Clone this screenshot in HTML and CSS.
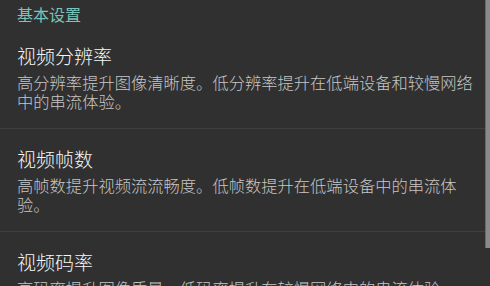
FILE: index.html
```html
<!DOCTYPE html>
<html lang="zh-CN">
<head>
<meta charset="utf-8">
<link rel="stylesheet" href="styles.css">
</head>
<body>
<div class="list">
  <div class="category">基本设置</div>
  <div class="item">
    <div class="title">视频分辨率</div>
    <div class="desc">高分辨率提升图像清晰度。低分辨率提升在低端设备和较慢网络中的串流体验。</div>
  </div>
  <div class="item">
    <div class="title">视频帧数</div>
    <div class="desc">高帧数提升视频流流畅度。低帧数提升在低端设备中的串流体验。</div>
  </div>
  <div class="item">
    <div class="title">视频码率</div>
    <div class="desc">高码率提升图像质量。低码率提升在较慢网络中的串流体验。</div>
  </div>
</div>
<div class="scrollbar"></div>
</body>
</html>
```
FILE: styles.css
```css
html, body {
  margin: 0;
  padding: 0;
  background: #303030;
  height: 100%;
  overflow: hidden;
}
body {
  font-family: "Noto Sans CJK SC", "Noto Sans", sans-serif;
  font-weight: 300;
}
.list {
  display: flex;
  flex-direction: column;
}
.category {
  color: #7cc4b9;
  font-size: 16px;
  font-weight: 400;
  line-height: 20px;
  padding: 4px 17px 2px;
  height: 20px;
}
.item {
  padding: 18px 14px 17px 17px;
  border-bottom: 1px solid #404040;
}
.title {
  color: #f7f7f7;
  font-size: 19px;
  line-height: 24px;
}
.desc {
  color: #c6c6c6;
  font-size: 16.3px;
  line-height: 19px;
  margin-top: 5px;
}
.scrollbar {
  position: absolute;
  top: 0;
  right: 0;
  width: 4px;
  height: 248px;
  background: #8a8a8a;
  border-left: 1px solid #6a6a6a;
}
```
